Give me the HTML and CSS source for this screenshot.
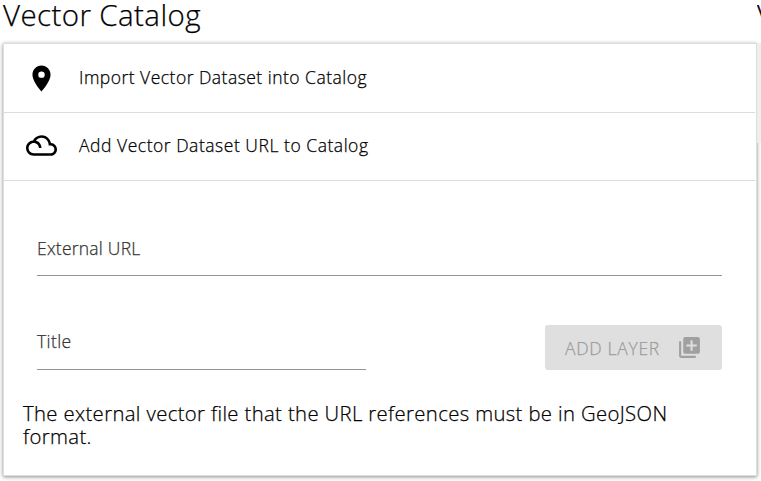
FILE: index.html
```html
<!DOCTYPE html>
<html lang="en">
<head>
<meta charset="utf-8">
<title>Vector Catalog</title>
<link rel="stylesheet" href="styles.css">
</head>
<body>
<main class="columns">
  <section class="catalog">
    <h1>Vector Catalog</h1>
    <div class="card">
      <div class="item">
        <svg class="icon" viewBox="0 0 24 24"><path d="M12 2C8.13 2 5 5.13 5 9c0 5.25 7 13 7 13s7-7.75 7-13c0-3.87-3.13-7-7-7zm0 9.5a2.500 2.500 0 0 1 0-5 2.500 2.500 0 0 1 0 5z"/></svg>
        <span class="import">Import Vector Dataset into Catalog</span>
      </div>
      <div class="item">
        <svg class="icon" viewBox="0 0 24 24"><path d="M19.35 10.04C18.67 6.59 15.64 4 12 4 9.11 4 6.61 5.64 5.36 8.04 2.35 8.36 0 10.9 0 14c0 3.31 2.69 6 6 6h13c2.76 0 5-2.24 5-5 0-2.64-2.05-4.78-4.65-4.96zM19 18H6c-2.21 0-4-1.79-4-4s1.79-4 4-4 4 1.79 4 4h2c0-2.76-1.86-5.08-4.4-5.78C8.61 6.88 10.2 6 12 6c3.03 0 5.5 2.47 5.5 5.5v.5H19c1.65 0 3 1.35 3 3s-1.35 3-3 3z"/></svg>
        <span class="external">Add Vector Dataset URL to Catalog</span>
      </div>
      <form class="form">
        <div class="field">External URL</div>
        <div class="row">
          <div class="field title-field">Title</div>
          <button class="add" type="button" disabled><span>ADD LAYER</span>
            <svg class="add-icon" viewBox="0 0 24 24"><path d="M4 6H2v14c0 1.1.9 2 2 2h14v-2H4V6zm16-4H8c-1.1 0-2 .9-2 2v12c0 1.1.9 2 2 2h12c1.1 0 2-.9 2-2V4c0-1.1-.9-2-2-2zm-1 9h-4v4h-2v-4H9V9h4V5h2v4h4v2z"/></svg>
          </button>
        </div>
      </form>
      <p class="note">The external vector file that the URL references must be in GeoJSON format.</p>
    </div>
  </section>
  <section class="next"><h1>V</h1><div class="card"></div></section>
</main>
</body>
</html>
```
FILE: styles.css
```css
* { box-sizing: border-box; }
html, body { margin: 0; height: 481px; overflow: hidden; background: #fff; }
body { font-family: "Open Sans", "Noto Sans", sans-serif; font-weight: 300; color: #000; -webkit-text-stroke: .25px currentColor; }
.columns { display: flex; height: 481px; overflow: hidden; }
.catalog { width: 754px; margin-left: 3px; flex: none; }
h1 { margin: 0; height: 43px; font-size: 29.5px; letter-spacing: .4px; font-weight: 300; line-height: 30px; white-space: nowrap; }
.card { height: 433px; border: 1px solid #ddd; box-shadow: 0 1px 4px rgba(0,0,0,.45); background: #fff; }
.item { height: 68px; display: flex; align-items: center; border-bottom: 1px solid #ddd; padding-left: 22px; margin-right: 1px; font-size: 17.5px; white-space: nowrap; }
.item:first-child { height: 69px; }
.item span { padding-bottom: 2px; }
.import { letter-spacing: .48px; }
.item .external { padding-bottom: 3px; letter-spacing: .53px; }
.icon { width: 31px; height: 31px; margin-right: 22px; flex: none; }
.item:nth-child(2) .icon { margin-bottom: 2px; }
.form { padding: 45px 34px 0 33px; font-size: 17.5px; letter-spacing: .23px; color: #333; }
.field { height: 50px; line-height: 44px; border-bottom: 1px solid #949494; }
.row { display: flex; justify-content: space-between; margin-top: 44px; }
.title-field { width: 329px; line-height: 43px; letter-spacing: .4px; }
.add { width: 177px; height: 45px; margin: 5px 0 0; padding: 0 20px; border: 0; border-radius: 3px; background: #dfdfdf; color: #9c9c9c; font: inherit; letter-spacing: .7px; display: flex; align-items: center; justify-content: space-between; white-space: nowrap; }
.add-icon { width: 25px; height: 25px; fill: #a0a0a0; }
.note { margin: 32px 60px 0 19px; font-size: 20.3px; letter-spacing: .37px; line-height: 23px; }
.next { flex: 1; min-width: 0; overflow: hidden; }
.next .card { width: 4px; height: 100px; border: 0; background: #eee; box-shadow: none; }
```
